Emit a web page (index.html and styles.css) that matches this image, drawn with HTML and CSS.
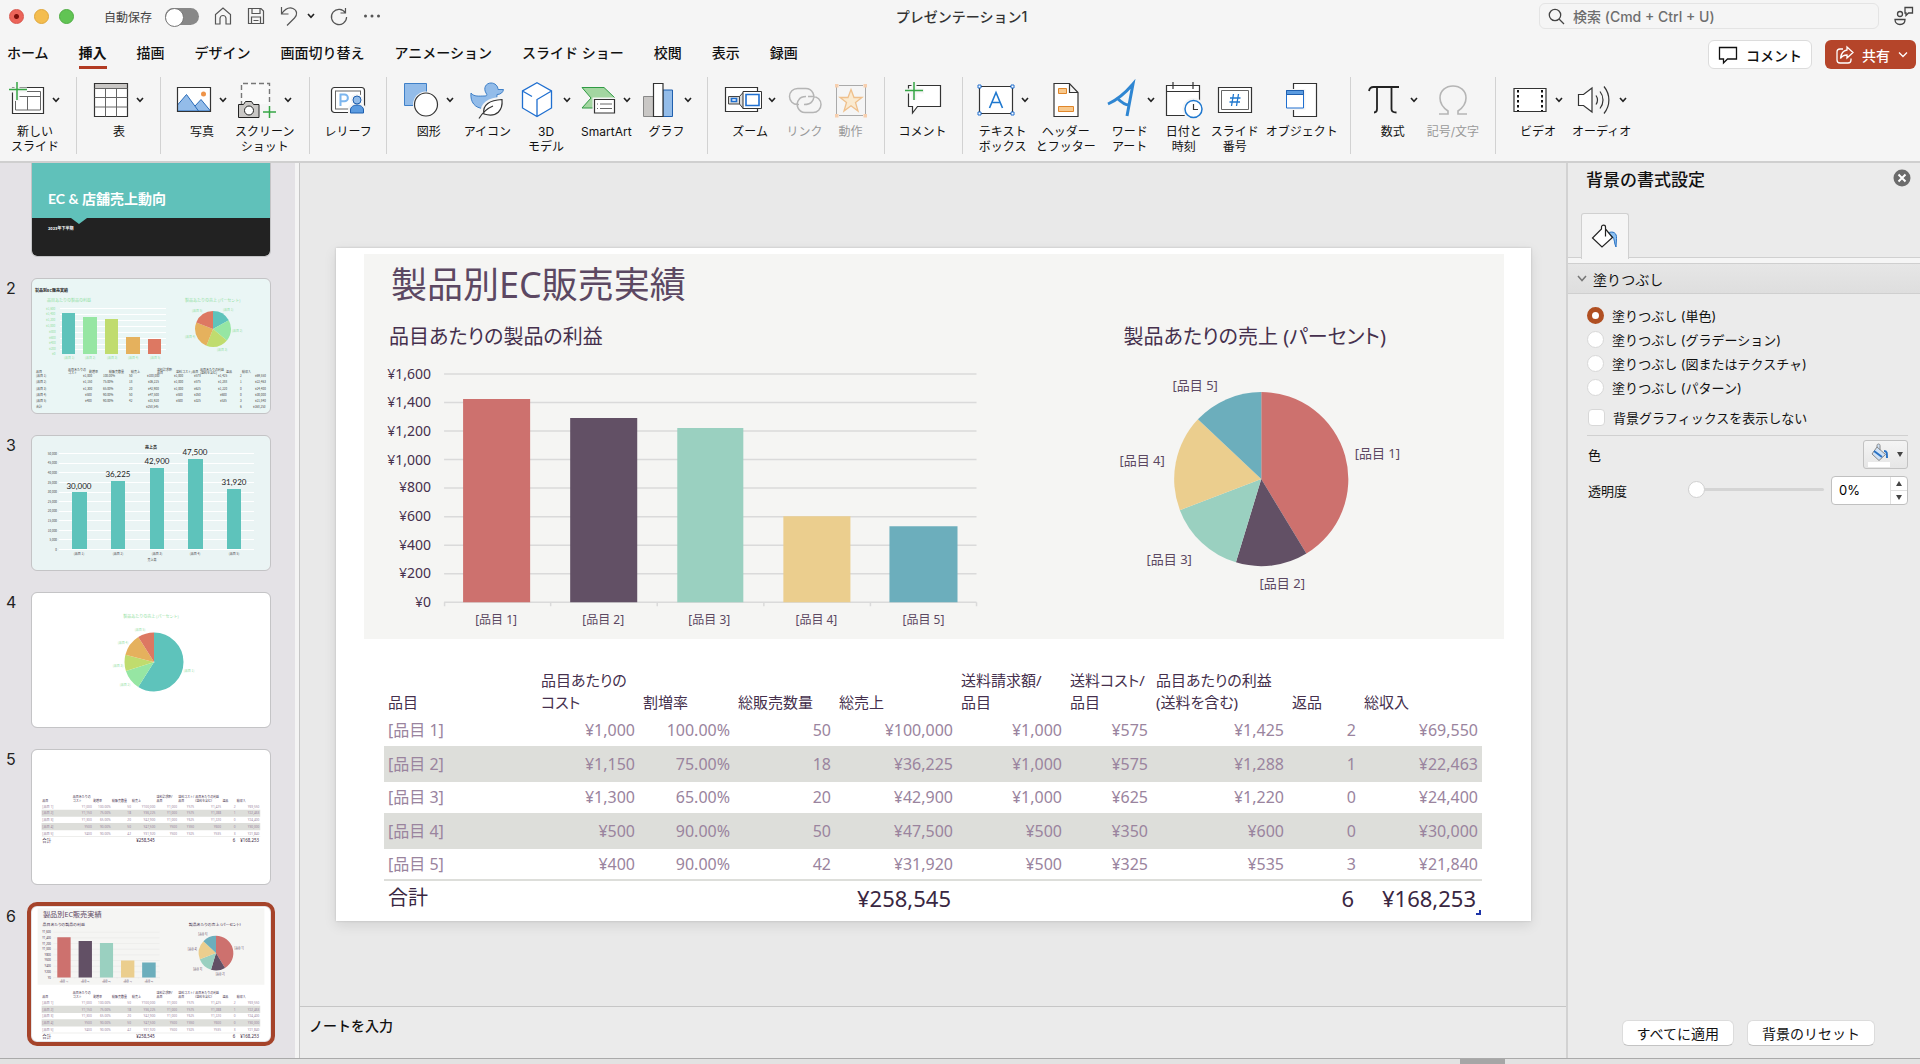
FILE: index.html
```html
<!DOCTYPE html>
<html lang="ja">
<head>
<meta charset="utf-8">
<title>プレゼンテーション1</title>
<link rel="stylesheet" href="styles.css">
</head>
<body>
<svg class="defs" aria-hidden="true">
  <defs>
    <symbol id="chev" viewBox="0 0 8 6"><path d="M1 1l3 3.4L7 1" fill="none" stroke="currentColor" stroke-width="1.6"/></symbol>
    <g id="slide-table">
      <path class="band" d="M48 496h1098v36H48zM48 563h1098v36H48zM48 631h1098v2H48z"/>
      <g class="t-head">
        <text x="52" y="458">品目</text>
        <text x="205" y="436">品目あたりの<tspan x="205" y="458">コスト</tspan></text>
        <text x="307" y="458">割増率</text>
        <text x="402" y="458">総販売数量</text>
        <text x="502" y="458">総売上</text>
        <text x="625" y="436">送料請求額/<tspan x="625" y="458">品目</tspan></text>
        <text x="734" y="436">送料コスト/<tspan x="734" y="458">品目</tspan></text>
        <text x="820" y="436">品目あたりの利益<tspan x="820" y="458">(送料を含む)</tspan></text>
        <text x="956" y="458">返品</text>
        <text x="1028" y="458">総収入</text>
      </g>
      <g class="t-body">
        <text x="52" y="487">[品目 1]<tspan x="52" y="520">[品目 2]</tspan><tspan x="52" y="554">[品目 3]</tspan><tspan x="52" y="588">[品目 4]</tspan><tspan x="52" y="621">[品目 5]</tspan></text>
        <g class="t-end">
          <text x="300" y="487">¥1,000<tspan x="300" y="520">¥1,150</tspan><tspan x="300" y="554">¥1,300</tspan><tspan x="300" y="588">¥500</tspan><tspan x="300" y="621">¥400</tspan></text>
          <text x="395" y="487">100.00%<tspan x="395" y="520">75.00%</tspan><tspan x="395" y="554">65.00%</tspan><tspan x="395" y="588">90.00%</tspan><tspan x="395" y="621">90.00%</tspan></text>
          <text x="497" y="487">50<tspan x="497" y="520">18</tspan><tspan x="497" y="554">20</tspan><tspan x="497" y="588">50</tspan><tspan x="497" y="621">42</tspan></text>
          <text x="619" y="487">¥100,000<tspan x="619" y="520">¥36,225</tspan><tspan x="619" y="554">¥42,900</tspan><tspan x="619" y="588">¥47,500</tspan><tspan x="619" y="621">¥31,920</tspan></text>
          <text x="728" y="487">¥1,000<tspan x="728" y="520">¥1,000</tspan><tspan x="728" y="554">¥1,000</tspan><tspan x="728" y="588">¥500</tspan><tspan x="728" y="621">¥500</tspan></text>
          <text x="814" y="487">¥575<tspan x="814" y="520">¥575</tspan><tspan x="814" y="554">¥625</tspan><tspan x="814" y="588">¥350</tspan><tspan x="814" y="621">¥325</tspan></text>
          <text x="949" y="487">¥1,425<tspan x="949" y="520">¥1,288</tspan><tspan x="949" y="554">¥1,220</tspan><tspan x="949" y="588">¥600</tspan><tspan x="949" y="621">¥535</tspan></text>
          <text x="1022" y="487">2<tspan x="1022" y="520">1</tspan><tspan x="1022" y="554">0</tspan><tspan x="1022" y="588">0</tspan><tspan x="1022" y="621">3</tspan></text>
          <text x="1142" y="487">¥69,550<tspan x="1142" y="520">¥22,463</tspan><tspan x="1142" y="554">¥24,400</tspan><tspan x="1142" y="588">¥30,000</tspan><tspan x="1142" y="621">¥21,840</tspan></text>
        </g>
      </g>
      <g class="t-total">
        <text x="52" y="657">合計</text>
        <g class="t-end"><text x="617" y="657">¥258,545</text><text x="1020" y="657">6</text><text x="1140" y="657">¥168,253</text></g>
      </g>
    </g>
  </defs>
</svg>

<div class="app">
  <header class="chrome">
    <div class="titlebar">
      <div class="tb-left">
        <div class="lights"><button class="light red" aria-label="閉じる"></button><button class="light yellow" aria-label="しまう"></button><button class="light green" aria-label="拡大"></button></div>
        <label class="autosave"><span>自動保存</span><input type="checkbox" role="switch"></label>
        <div class="quick">
          <button aria-label="ホーム"><svg width="18" height="18" viewBox="0 0 18 18"><path d="M1.5 17V7.5L9 1l7.500 6.500V17h-4.500v-5.500a3 3 0 0 0-6 0V17z"/></svg></button>
          <button aria-label="保存"><svg width="18" height="18" viewBox="0 0 18 18"><path d="M1.500 1.500h12.500l2.500 2.500v12.500h-15zM5 1.500v5h8v-5M4.500 16.500v-6.500h9v6.500M6.500 13.500h5"/></svg></button>
          <button class="undo" aria-label="元に戻す"><svg width="18" height="20" viewBox="0 0 18 20"><path d="M1.500 1v7h7M1.500 8C5 3 9 .8 13 2.500c4.500 2 4.500 6.500 1.500 9.500L7 19.500"/></svg><svg class="chev" width="8" height="6"><use href="#chev"/></svg></button>
          <button aria-label="やり直し"><svg width="18" height="18" viewBox="0 0 18 18"><path d="M15.500 1v5H10.500M15.500 6A7.600 7.600 0 1 0 16.600 10"/></svg></button>
          <button aria-label="その他"><svg width="18" height="4" viewBox="0 0 18 4"><path class="dots" d="M2.500 2h0M9 2h0M15.500 2h0"/></svg></button>
        </div>
      </div>
      <div class="doc-title">プレゼンテーション1</div>
      <div class="tb-right">
        <label class="search"><svg width="17" height="17" viewBox="0 0 17 17"><circle cx="7" cy="7" r="5.700"/><path d="M11 11l5 5"/></svg><input type="text" aria-label="検索" placeholder="検索 (Cmd + Ctrl + U)"></label>
        <button class="presence" aria-label="共同編集"><svg width="20" height="20" viewBox="0 0 20 20"><circle cx="6" cy="8" r="2.500"/><path d="M1 13.500h10c0 3-2 5-5 5s-5-2-5-5zM11 1.500h7.500v5.500h-4l-2.500 2.500V7h-1z"/></svg></button>
      </div>
    </div>

    <div class="tabrow">
      <nav class="tabs">
        <a href="#">ホーム</a><a href="#" class="active" aria-current="page">挿入</a><a href="#">描画</a><a href="#">デザイン</a><a href="#">画面切り替え</a><a href="#">アニメーション</a><a href="#">スライド ショー</a><a href="#">校閲</a><a href="#">表示</a><a href="#">録画</a>
      </nav>
      <div class="actions">
        <button class="btn-comment"><svg width="20" height="18" viewBox="0 0 20 18"><path d="M1.500 1.500h17v11.500h-9L5.500 17v-4h-4z"/></svg>コメント</button>
        <button class="btn-share"><svg width="18" height="18" viewBox="0 0 18 18"><path d="M7 3H4a3 3 0 0 0-3 3v8a3 3 0 0 0 3 3h8a3 3 0 0 0 3-3v-1.500M11 1l6 5.500-6 5.500V9C8 9 6 10 4.500 12.500 5 8 7.500 4.500 11 4z"/></svg>共有<svg width="10" height="7" viewBox="0 0 10 7"><path d="M1 1.500l4 4 4-4"/></svg></button>
      </div>
    </div>

    <div class="ribbon">
      <div class="group g-first">
        <button class="tool"><span class="ico"><svg width="34" height="36" viewBox="0 0 34 36"><path class="k" fill="#fff" d="M2.500 5.500h31v26h-31z"/><path class="g2" d="M5.500 9.500h25v18.500h-25zM5.500 14.500h25M17.500 14.500v13.500"/><path d="M7 1v18M0 8h17" stroke="#f5f5f5" stroke-width="5"/><path d="M7 0v18M-1 7.500h18" stroke="#36a645" stroke-width="1.500"/></svg><svg class="chev" width="8" height="6"><use href="#chev"/></svg></span><span class="lbl">新しい<br>スライド</span></button>
      </div>
      <div class="group">
        <button class="tool"><span class="ico"><svg width="34" height="36" viewBox="0 0 34 36"><path fill="#fff" d="M.5 1.500h33v33H.5z"/><path fill="#c9c7c5" d="M.5 1.500h33v5H.5z"/><path class="k" d="M.5 1.500h33v33H.5z"/><path class="g2" d="M.5 6.500h33M.5 15.500h33M.5 25h33M11.500 6.500v28M22.500 6.500v28"/></svg><svg class="chev" width="8" height="6"><use href="#chev"/></svg></span><span class="lbl">表</span></button>
      </div>
      <div class="group g-pic">
        <button class="tool"><span class="ico"><svg width="34" height="36" viewBox="0 0 34 36"><path fill="#fff" d="M.5 5.500h33v24H.5z"/><path fill="#93bce9" stroke="#2b6cb8" d="M.5 23L9.500 12.500l12 16.500M18 24l6-6.500 9.500 11.500H.5V23"/><circle cx="26.500" cy="12" r="2.500" fill="#ee9348"/><path class="k" d="M.5 5.500h33v24H.5z"/></svg><svg class="chev" width="8" height="6"><use href="#chev"/></svg></span><span class="lbl">写真</span></button>
        <button class="tool"><span class="ico"><svg width="38" height="36" viewBox="0 0 38 36"><path fill="#fafafa" stroke="#777" stroke-width="1.400" stroke-dasharray="5 3" d="M3.500 24V1.500h28v20"/><path fill="#c9c7c5" stroke="#222" d="M.5 22.500h5l2-3h6l2 3h5.500v13H.5z"/><ellipse cx="11" cy="28.500" rx="4.500" ry="4.500" fill="#fff" stroke="#222"/><path d="M31.500 24v12M25 30h13" stroke="#36a645" stroke-width="1.500"/></svg><svg class="chev" width="8" height="6"><use href="#chev"/></svg></span><span class="lbl">スクリーン<br>ショット</span></button>
      </div>
      <div class="group g-relief">
        <button class="tool"><span class="ico"><svg width="34" height="36" viewBox="0 0 34 36"><rect class="k" fill="#fff" x=".5" y="5.500" width="33" height="25" rx="3"/><rect class="g2" x="4.500" y="9" width="25" height="18"/><path d="M9.500 24V12.500h4a3.300 3.300 0 0 1 0 6.800h-4" stroke="#7db6ee" stroke-width="2"/><path fill="#f5f5f5" d="M17 32v-5c0-3 2-4 4-5-3-6 0-10 5-10s8 4 5 10c2 1 4 2 4 5v5z"/><circle cx="26" cy="18" r="4" fill="#93bce9" stroke="#1f5fae"/><path fill="#5b9be0" stroke="#1f5fae" d="M19.500 31v-3c0-3 3-5 6.500-5s6.500 2 6.500 5v3z"/></svg></span><span class="lbl">レリーフ</span></button>
      </div>
      <div class="group g-draw">
        <button class="tool"><span class="ico"><svg width="34" height="36" viewBox="0 0 34 36"><path fill="#93bce9" stroke="#3f80c8" d="M.5 1.500h22v22H.5z"/><circle cx="22" cy="22.500" r="13" fill="#f5f5f5"/><circle class="k" cx="22" cy="22.500" r="11.500" fill="#fff"/></svg><svg class="chev" width="8" height="6"><use href="#chev"/></svg></span><span class="lbl">図形</span></button>
        <button class="tool"><span class="ico"><svg width="34" height="36" viewBox="0 0 34 36"><path fill="#93bce9" stroke="#3f80c8" d="M1 11c3 4 8 3 14 3 2 0 2.500-1 1-3-3-5 0-10 5-10 4 0 7 3 7 6.500h5.500c-.5 3-3 5-6.500 5 0 8-3 14-13 14C5 26.500 0 20 1 11z"/><path fill="#fff" stroke="#f5f5f5" stroke-width="4" d="M13 32c-2-9 6-15 19-15 1 11-5 20-17 16z"/><path class="k" fill="#fff" d="M14 32c-2-9 6-14 18-14.500C33 28 27 36 14 32zM9 36.500C13 30 18 26 23 24"/></svg></span><span class="lbl">アイコン</span></button>
        <button class="tool"><span class="ico wide"><svg width="32" height="36" viewBox="0 0 32 36"><path fill="#fff" stroke="#1f6fd0" stroke-width="1.300" d="M16 .8l14.500 8.200v17L16 34.500 1.500 26V9zM16 34.500V17.500L30.500 9M1.500 9l9.500 5.500"/></svg><svg class="chev" width="8" height="6"><use href="#chev"/></svg></span><span class="lbl">3D<br>モデル</span></button>
        <button class="tool"><span class="ico"><svg width="34" height="36" viewBox="0 0 34 36"><path fill="#a3d6a1" stroke="#2f9a43" d="M1 5.500h22L34 16v10H1l9-10z"/><path fill="#f5f5f5" d="M11.500 15.500H36V34H11.500z"/><path class="k" fill="#fff" d="M13.500 17.500h20v13.500h-20z"/><path class="g2" d="M16 22h1M19 22h12M16 26.500h1M19 26.500h12"/></svg><svg class="chev" width="8" height="6"><use href="#chev"/></svg></span><span class="lbl">SmartArt</span></button>
        <button class="tool"><span class="ico wide"><svg width="32" height="36" viewBox="0 0 32 36"><path fill="#c9c7c5" stroke="#888" d="M1.500 14.500h10v20h-10z"/><path fill="#93bce9" stroke="#1f5fae" d="M21 8h9.500v26.500H21z"/><path class="k" fill="#fff" d="M11.500 1.500h9.500v33h-9.500z"/></svg><svg class="chev" width="8" height="6"><use href="#chev"/></svg></span><span class="lbl">グラフ</span></button>
      </div>
      <div class="group g-link">
        <button class="tool"><span class="ico tight"><svg width="37" height="36" viewBox="0 0 37 36"><path class="k" fill="#fff" d="M.5 5.500h32v24H.5z"/><path fill="#dcdcdc" stroke="#444" d="M3.500 14.500h11v7.500h-11zM14.500 14.500l4-4.500v17l-4-5z"/><path fill="#fff" stroke="#333" d="M18 9.500h18.500v17H18z"/><path fill="#fff" stroke="#1f6fd0" stroke-width="1.600" d="M21 12.500h13v11H21zM6.500 16.500h5v3h-5z"/></svg><svg class="chev" width="8" height="6"><use href="#chev"/></svg></span><span class="lbl">ズーム</span></button>
        <button class="tool off" disabled><span class="ico"><svg width="34" height="36" viewBox="0 0 34 36"><path stroke="#b5b5b5" stroke-width="1.500" d="M11 22.500h-1.500a8 8 0 0 1 0-16h8A8 8 0 0 1 24 19.500c-2 3-5 3-8 3M20 14.500h5a8 8 0 0 1 0 16h-8a8 8 0 0 1-6-13c2-3 4-3 7-3"/></svg></span><span class="lbl">リンク</span></button>
        <button class="tool off" disabled><span class="ico"><svg width="34" height="36" viewBox="0 0 34 36"><path stroke="#aaa" d="M2.500 5v27M31.500 5v27M5 3.500h24M5 33.500h24"/><path fill="#f7cfae" d="M1 2h3.500v3.500H1zM29.500 2H33v3.500h-3.500zM1 32h3.500v3.500H1zM29.500 32H33v3.500h-3.500z"/><path fill="#faead0" stroke="#efc08c" stroke-width="1.300" d="M17 7.500l3 8h8l-6.500 5 2.500 8.500-7-5.300-7 5.300 2.500-8.500-6.500-5h8z"/></svg></span><span class="lbl">動作</span></button>
      </div>
      <div class="group g-comment">
        <button class="tool"><span class="ico"><svg width="36" height="36" viewBox="0 0 36 36"><path class="k" fill="#fff" d="M3.500 3.500h32v21h-23L7.500 31v-6.500h-4z"/><path d="M9 2v16M0 9h19" stroke="#f5f5f5" stroke-width="5"/><path d="M9 0v18M0 8.500h18" stroke="#36a645" stroke-width="1.500"/></svg></span><span class="lbl">コメント</span></button>
      </div>
      <div class="group g-text">
        <button class="tool"><span class="ico tight"><svg width="38" height="36" viewBox="0 0 38 36"><path class="k" fill="#fff" d="M2.500 4.500h33v27h-33z"/><path fill="#fff" stroke="#1f6fd0" d="M1 3h3v3H1zM34 3h3v3h-3zM1 30h3v3H1zM34 30h3v3h-3z"/><path stroke="#1f78cf" stroke-width="1.600" d="M12.500 26L19 10.500 25.500 26M14.500 20.500h9"/></svg><svg class="chev" width="8" height="6"><use href="#chev"/></svg></span><span class="lbl">テキスト<br>ボックス</span></button>
        <button class="tool"><span class="ico"><svg width="26" height="36" viewBox="0 0 26 36"><path class="k" fill="#fff" d="M1 1.500h15.500l8.500 9v24H1zM16.500 1.500v9H25"/><path fill="#f8c98d" stroke="#e0862a" d="M5.500 6.500h8v5h-8zM5.500 24.500h15v5h-15z"/></svg></span><span class="lbl">ヘッダー<br>とフッター</span></button>
        <button class="tool t-wa"><span class="ico wide"><svg width="32" height="36" viewBox="0 0 32 36"><path stroke="#2f86d2" stroke-width="3" d="M3 22C12 18 22 9 28 2L22 34M12 16c4 4 8 7 12 7"/></svg><svg class="chev" width="8" height="6"><use href="#chev"/></svg></span><span class="lbl">ワード<br>アート</span></button>
        <button class="tool t-date"><span class="ico"><svg width="38" height="38" viewBox="0 0 38 38"><path class="k" fill="#fff" d="M1.500 4.500h33v30h-33zM1.500 10.500h33M8 1v7M28 1v7"/><circle cx="28.500" cy="28" r="11" fill="#f5f5f5"/><circle cx="28.500" cy="28" r="8.500" fill="#fff" stroke="#1f78cf" stroke-width="1.500"/><path class="k" d="M28.500 23v5.500h4.500"/></svg></span><span class="lbl">日付と<br>時刻</span></button>
        <button class="tool"><span class="ico"><svg width="34" height="36" viewBox="0 0 34 36"><path class="k" fill="#fff" d="M.5 5.500h33v25H.5z"/><path class="g2" d="M3.500 8.500h27v19h-27z"/><path stroke="#1f78cf" stroke-width="1.300" d="M15.500 12l-2 12M20.500 12l-2 12M12 16h10.500M11.500 20h10.500"/></svg></span><span class="lbl">スライド<br>番号</span></button>
        <button class="tool"><span class="ico"><svg width="32" height="36" viewBox="0 0 32 36"><path class="k" fill="#fff" d="M7.500 1.500h23v33h-23z"/><path stroke="#f5f5f5" stroke-width="3" d="M.5 8.500H18v18H.5z"/><path fill="#fff" stroke="#1f6fd0" d="M.5 8.500h17v17.500H.5z"/><path fill="#5b9be0" stroke="#1f5fae" d="M.5 8.500h17v4H.5z"/></svg></span><span class="lbl">オブジェクト</span></button>
      </div>
      <div class="group">
        <button class="tool"><span class="ico wide"><svg width="32" height="36" viewBox="0 0 32 36"><path stroke="#222" stroke-width="1.800" d="M1 9c.5-3 2-4 4.500-4H31M9 5v22c0 2-1 3.500-3 3.500M23.500 5v22c0 2.500 1.500 3.500 5 3.500"/></svg><svg class="chev" width="8" height="6"><use href="#chev"/></svg></span><span class="lbl">数式</span></button>
        <button class="tool off" disabled><span class="ico"><svg width="30" height="36" viewBox="0 0 30 36"><path stroke="#b5b5b5" stroke-width="1.600" d="M1 32h9v-3C4 25 2 20.500 2 16 2 8.500 8 4 15 4s13 4.500 13 12c0 4.500-2 9-8 13v3h9"/></svg></span><span class="lbl">記号/文字</span></button>
      </div>
      <div class="group">
        <button class="tool"><span class="ico"><svg width="34" height="36" viewBox="0 0 34 36"><path class="k" fill="#fff" d="M1 6.500h32v23H1z"/><path stroke="#111" stroke-width="2" stroke-dasharray="2.500 2.500" d="M5 8v21M29 8v21"/></svg><svg class="chev" width="8" height="6"><use href="#chev"/></svg></span><span class="lbl">ビデオ</span></button>
        <button class="tool"><span class="ico"><svg width="34" height="36" viewBox="0 0 34 36"><path class="k" fill="#fff" d="M1.500 12.500h5L15 6v24l-8.500-6.500h-5z"/><path class="k" d="M19 13.500c2 3 2 6 0 9M23 9.500c4 5 4 12 0 17M27 4.500c6.500 8 6.500 19 0 27"/></svg><svg class="chev" width="8" height="6"><use href="#chev"/></svg></span><span class="lbl">オーディオ</span></button>
      </div>
    </div>
  </header>

  <main class="work">
    <aside class="thumbs">
      <ol>
        <li><span class="num"></span>
          <button class="thumb"><svg viewBox="0 0 238 134"><path fill="#222" d="M0 0h238v134H0z"/><path fill="#60c1ba" d="M0 0h238v96H55l-8 6-8-6H0z"/><text class="th-title" x="16" y="82">EC &amp; 店舗売上動向</text><text class="th-sub" x="16" y="108">2023年下半期</text></svg></button></li>
        <li><span class="num">2</span>
          <button class="thumb"><svg viewBox="0 0 238 134"><path fill="#eaf6f5" d="M0 0h238v134H0z"/>
            <path stroke="#fff" d="M28 29.500h106M28 35.500h106M28 41.500h106M28 47.500h106M28 53.500h106M28 59.500h106M28 65.500h106M28 70.500h106"/>
            <path fill="#5ec3bb" d="M30 34h13v41H30z"/><path fill="#96e6a3" d="M51 38h14v37H51z"/><path fill="#c0dc6e" d="M73 40h13v35H73z"/><path fill="#e5b15d" d="M94 58h14v17H94z"/><path fill="#dd7862" d="M116 60h13v15h-13z"/>
            <g class="pie" transform="rotate(-90 181 50)"><circle class="wedge-s2" cx="181" cy="50" r="9" pathLength="100" stroke="#5ec3bb" stroke-dasharray="17 83"/><circle class="wedge-s2" cx="181" cy="50" r="9" pathLength="100" stroke="#96e6a3" stroke-dasharray="19 81" stroke-dashoffset="-17"/><circle class="wedge-s2" cx="181" cy="50" r="9" pathLength="100" stroke="#c0dc6e" stroke-dasharray="20 80" stroke-dashoffset="-36"/><circle class="wedge-s2" cx="181" cy="50" r="9" pathLength="100" stroke="#e5b15d" stroke-dasharray="25 75" stroke-dashoffset="-56"/><circle class="wedge-s2" cx="181" cy="50" r="9" pathLength="100" stroke="#dd7862" stroke-dasharray="19 81" stroke-dashoffset="-81"/></g>
            <text class="th-b4" x="3" y="13">製品別EC販売実績</text>
            <g class="th-green"><text class="th-4" x="15" y="23">品目あたりの製品の利益</text><text class="th-4" x="153" y="23">製品あたりの売上 (パーセント)</text>
            <text class="th-3" x="14" y="31">¥1,600<tspan x="14" y="36">¥1,400</tspan><tspan x="14" y="42">¥1,200</tspan><tspan x="14" y="48">¥1,000</tspan><tspan x="17" y="54">¥800</tspan><tspan x="17" y="60">¥600</tspan><tspan x="17" y="65">¥400</tspan><tspan x="17" y="71">¥200</tspan><tspan x="20" y="76">¥0</tspan></text>
            <text class="th-3" x="32" y="80">[品目 1]<tspan x="53">[品目 2]</tspan><tspan x="75">[品目 3]</tspan><tspan x="96">[品目 4]</tspan><tspan x="118">[品目 5]</tspan></text>
            <text class="th-3" x="160" y="33">[品目 5]<tspan x="191" y="32">[品目 1]</tspan><tspan x="200" y="53">[品目 2]</tspan><tspan x="185" y="72">[品目 3]</tspan><tspan x="153" y="59">[品目 4]</tspan></text></g>
            <text class="th-3" x="4" y="94">品目<tspan x="36" y="92">品目あたりの</tspan><tspan x="36" y="95">コスト</tspan><tspan x="57" y="94">割増率</tspan><tspan x="77">総販売数量</tspan><tspan x="99">総売上</tspan><tspan x="125" y="92">送料請求額</tspan><tspan x="125" y="95">品目</tspan><tspan x="144" y="94">送料コスト/品目</tspan><tspan x="168" y="92">品目あたりの利益</tspan><tspan x="168" y="95">(送料を含む)</tspan><tspan x="194" y="94">返品</tspan><tspan x="210">総収入</tspan></text>
            <text class="th-3" x="4" y="98">[品目 1]<tspan x="51">¥1,000</tspan><tspan x="71">100.00%</tspan><tspan x="97">50</tspan><tspan x="115">¥100,000</tspan><tspan x="142">¥1,000</tspan><tspan x="162">¥575</tspan><tspan x="186">¥1,425</tspan><tspan x="208">2</tspan><tspan x="223">¥69,550</tspan></text>
            <text class="th-3" x="4" y="104">[品目 2]<tspan x="51">¥1,150</tspan><tspan x="71">75.00%</tspan><tspan x="97">18</tspan><tspan x="116">¥36,225</tspan><tspan x="142">¥1,000</tspan><tspan x="162">¥575</tspan><tspan x="186">¥1,288</tspan><tspan x="208">1</tspan><tspan x="223">¥22,463</tspan></text>
            <text class="th-3" x="4" y="111">[品目 3]<tspan x="51">¥1,300</tspan><tspan x="71">65.00%</tspan><tspan x="97">20</tspan><tspan x="116">¥42,900</tspan><tspan x="142">¥1,000</tspan><tspan x="162">¥625</tspan><tspan x="186">¥1,220</tspan><tspan x="208">0</tspan><tspan x="223">¥24,400</tspan></text>
            <text class="th-3" x="4" y="117">[品目 4]<tspan x="53">¥500</tspan><tspan x="71">90.00%</tspan><tspan x="97">50</tspan><tspan x="116">¥47,500</tspan><tspan x="144">¥500</tspan><tspan x="162">¥350</tspan><tspan x="188">¥600</tspan><tspan x="208">0</tspan><tspan x="223">¥30,000</tspan></text>
            <text class="th-3" x="4" y="123">[品目 5]<tspan x="53">¥400</tspan><tspan x="71">90.00%</tspan><tspan x="97">42</tspan><tspan x="116">¥31,920</tspan><tspan x="144">¥500</tspan><tspan x="162">¥325</tspan><tspan x="188">¥535</tspan><tspan x="208">3</tspan><tspan x="223">¥21,840</tspan></text>
            <text class="th-3" x="4" y="129">合計<tspan x="114">¥258,545</tspan><tspan x="208">6</tspan><tspan x="221">¥168,253</tspan></text>
          </svg></button></li>
        <li><span class="num">3</span>
          <button class="thumb"><svg viewBox="0 0 238 134"><path fill="#eaf4f4" d="M0 0h238v134H0z"/>
            <path stroke="#fff" d="M27 17.500h195M27 27.500h195M27 36.500h195M27 46.500h195M27 56.500h195M27 65.500h195M27 75.500h195M27 84.500h195M27 94.500h195M27 103.500h195M27 113.500h195"/>
            <path fill="#5ec3bb" d="M40 56h15v57H40zM79 45h14v68H79zM118 32h14v81h-14zM156 23h15v90h-15zM195 53h14v60h-14z"/>
            <text class="th-b4 mid" x="119" y="13">売上高</text>
            <g class="th-8 mid"><text x="47" y="53">30,000</text><text x="86" y="41">36,225</text><text x="125" y="28">42,900</text><text x="163" y="19">47,500</text><text x="202" y="49">31,920</text></g>
            <text class="th-3 t-end" x="25" y="19">50,000<tspan x="25" y="28">45,000</tspan><tspan x="25" y="38">40,000</tspan><tspan x="25" y="48">35,000</tspan><tspan x="25" y="57">30,000</tspan><tspan x="25" y="67">25,000</tspan><tspan x="25" y="76">20,000</tspan><tspan x="25" y="86">15,000</tspan><tspan x="25" y="96">10,000</tspan><tspan x="25" y="105">5,000</tspan><tspan x="25" y="115">0</tspan></text>
            <text class="th-3 mid" x="47" y="119">[品目 1]<tspan x="86">[品目 2]</tspan><tspan x="125">[品目 3]</tspan><tspan x="163">[品目 4]</tspan><tspan x="202">[品目 5]</tspan><tspan x="120" y="125">売上高</tspan></text>
          </svg></button></li>
        <li><span class="num">4</span>
          <button class="thumb"><svg viewBox="0 0 238 134">
            <g class="pie" transform="rotate(-90 122 69)"><circle class="wedge-s4" cx="122" cy="69" r="15" pathLength="100" stroke="#5ec3bb" stroke-dasharray="59 41"/><circle class="wedge-s4" cx="122" cy="69" r="15" pathLength="100" stroke="#96e6a3" stroke-dasharray="11 89" stroke-dashoffset="-59"/><circle class="wedge-s4" cx="122" cy="69" r="15" pathLength="100" stroke="#c0dc6e" stroke-dasharray="9 91" stroke-dashoffset="-70"/><circle class="wedge-s4" cx="122" cy="69" r="15" pathLength="100" stroke="#e5b15d" stroke-dasharray="12 88" stroke-dashoffset="-79"/><circle class="wedge-s4" cx="122" cy="69" r="15" pathLength="100" stroke="#dd7862" stroke-dasharray="9 91" stroke-dashoffset="-91"/></g>
            <g class="th-green mid"><text class="th-4" x="119" y="25">製品あたりの売上 (パーセント)</text><text class="th-3" x="108" y="38">[品目 5]<tspan x="91" y="51">[品目 4]</tspan><tspan x="86" y="74">[品目 3]</tspan><tspan x="93" y="93">[品目 2]</tspan><tspan x="157" y="79">[品目 1]</tspan></text></g>
          </svg></button></li>
        <li><span class="num">5</span>
          <button class="thumb"><svg viewBox="0 0 1195 672"><use href="#slide-table" y="-197"/></svg></button></li>
        <li><span class="num">6</span>
          <button class="thumb selected" aria-current="true"><svg viewBox="0 0 1195 672"><path fill="#f5f5f3" d="M28 6h1139v384H28z"/><text class="s-title" x="55" y="50">製品別EC販売実績</text><text class="s-sub" x="53" y="97">品目あたりの製品の利益</text><text class="s-sub" x="787" y="97">製品あたりの売上 (パーセント)</text><use href="#bar-chart" x="44" y="112"/><use href="#pie-chart" x="644" y="112"/><use href="#slide-table"/></svg></button></li>
      </ol>
    </aside>

    <section class="editor">
      <div class="canvas">
        <article class="slide">
          <section class="report">
            <h1>製品別EC販売実績</h1>
            <div class="charts">
              <figure class="fig-bar">
                <figcaption>品目あたりの製品の利益</figcaption>
                <svg viewBox="0 0 600 272" role="img" aria-label="品目あたりの製品の利益">
                  <g id="bar-chart">
                    <path class="grid" d="M64 14h532M64 42.500h532M64 71h532M64 99.500h532M64 128h532M64 156.500h532M64 185h532M64 213.500h532M64 242h532M64.500 242v4M170.500 242v4M277 242v4M383.500 242v4M490 242v4M596 242v4"/>
                    <path class="c1" d="M83 39h67v203H83z"/><path class="c2" d="M190 58h67v184h-67z"/><path class="c3" d="M297 68h66v174h-66z"/><path class="c4" d="M403 156h67v86h-67z"/><path class="c5" d="M509 166h68v76h-68z"/>
                    <g class="axis t-end"><text x="51" y="19">¥1,600</text><text x="51" y="47">¥1,400</text><text x="51" y="76">¥1,200</text><text x="51" y="105">¥1,000</text><text x="51" y="132">¥800</text><text x="51" y="161">¥600</text><text x="51" y="190">¥400</text><text x="51" y="218">¥200</text><text x="51" y="247">¥0</text></g>
                    <g class="cat mid"><text x="116" y="264">[品目 1]</text><text x="223" y="264">[品目 2]</text><text x="329" y="264">[品目 3]</text><text x="436" y="264">[品目 4]</text><text x="543" y="264">[品目 5]</text></g>
                  </g>
                </svg>
              </figure>
              <figure class="fig-pie">
                <figcaption>製品あたりの売上 (パーセント)</figcaption>
                <svg viewBox="0 0 523 272" role="img" aria-label="製品あたりの売上">
                  <g id="pie-chart">
                    <path class="c1" d="M280 119V32A87 87 0 0 1 325.100 193.400z"/>
                    <path class="c2" d="M280 119L325.100 193.400A87 87 0 0 1 254.700 202.200z"/>
                    <path class="c3" d="M280 119L254.700 202.200A87 87 0 0 1 198.700 150z"/>
                    <path class="c4" d="M280 119L198.700 150A87 87 0 0 1 216.700 59.300z"/>
                    <path class="c5" d="M280 119L216.700 59.300A87 87 0 0 1 280 32z"/>
                    <g class="plabel mid"><text x="396" y="98">[品目 1]</text><text x="301" y="228">[品目 2]</text><text x="188" y="204">[品目 3]</text><text x="161" y="105">[品目 4]</text><text x="214" y="30">[品目 5]</text></g>
                  </g>
                </svg>
              </figure>
            </div>
          </section>
          <div class="table-wrap">
            <table>
              <colgroup><col class="w1"><col class="w2"><col class="w3"><col class="w4"><col class="w5"><col class="w6"><col class="w7"><col class="w8"><col class="w9"><col class="w10"></colgroup>
              <thead><tr><th>品目</th><th>品目あたりの<br>コスト</th><th>割増率</th><th>総販売数量</th><th>総売上</th><th>送料請求額/<br>品目</th><th>送料コスト/<br>品目</th><th>品目あたりの利益<br>(送料を含む)</th><th>返品</th><th>総収入</th></tr></thead>
              <tbody>
                <tr><td>[品目 1]</td><td>¥1,000</td><td>100.00%</td><td>50</td><td>¥100,000</td><td>¥1,000</td><td>¥575</td><td>¥1,425</td><td>2</td><td>¥69,550</td></tr>
                <tr><td>[品目 2]</td><td>¥1,150</td><td>75.00%</td><td>18</td><td>¥36,225</td><td>¥1,000</td><td>¥575</td><td>¥1,288</td><td>1</td><td>¥22,463</td></tr>
                <tr><td>[品目 3]</td><td>¥1,300</td><td>65.00%</td><td>20</td><td>¥42,900</td><td>¥1,000</td><td>¥625</td><td>¥1,220</td><td>0</td><td>¥24,400</td></tr>
                <tr><td>[品目 4]</td><td>¥500</td><td>90.00%</td><td>50</td><td>¥47,500</td><td>¥500</td><td>¥350</td><td>¥600</td><td>0</td><td>¥30,000</td></tr>
                <tr><td>[品目 5]</td><td>¥400</td><td>90.00%</td><td>42</td><td>¥31,920</td><td>¥500</td><td>¥325</td><td>¥535</td><td>3</td><td>¥21,840</td></tr>
              </tbody>
              <tfoot><tr><td>合計</td><td></td><td></td><td></td><td>¥258,545</td><td></td><td></td><td></td><td>6</td><td>¥168,253</td></tr></tfoot>
            </table>
            <i class="resize-mark"></i>
          </div>
        </article>
      </div>
      <div class="notes">ノートを入力</div>
    </section>

    <aside class="panel">
      <div class="panel-head"><h2>背景の書式設定</h2><button class="close" aria-label="閉じる"><svg width="18" height="18" viewBox="0 0 18 18"><circle cx="9" cy="9" r="8.500" fill="#6c6c6c"/><path d="M5.500 5.500l7 7M12.500 5.500l-7 7" stroke="#fff" stroke-width="2"/></svg></button></div>
      <div class="panel-tabs"><button class="ptab" aria-label="塗りつぶし"><svg width="28" height="26" viewBox="0 0 28 26"><path fill="#8cc0f0" stroke="#2a72c4" d="M17 9c5-2.500 9 0 8.500 5.500L25 23c-2-3-1-9-4-11z"/><path fill="#fff" stroke="#222" stroke-width="1.200" d="M10.500 5v-2c0-2.500 4-2.500 4 0v2l7 8.500L11 23 1.500 14zM14.500 5v7.500"/></svg></button></div>
      <button class="section-head" aria-expanded="true"><svg width="10" height="7" viewBox="0 0 10 7"><path d="M1 1l4 4.500L9 1" stroke="#777" stroke-width="1.500"/></svg>塗りつぶし</button>
      <form class="panel-body">
        <label class="opt"><input type="radio" name="fill" checked>塗りつぶし (単色)</label>
        <label class="opt"><input type="radio" name="fill">塗りつぶし (グラデーション)</label>
        <label class="opt"><input type="radio" name="fill">塗りつぶし (図またはテクスチャ)</label>
        <label class="opt"><input type="radio" name="fill">塗りつぶし (パターン)</label>
        <label class="opt check"><input type="checkbox">背景グラフィックスを表示しない</label>
        <div class="field color"><span>色</span><button type="button" class="swatch" aria-label="色"><svg width="22" height="24" viewBox="0 0 22 24"><path fill="#cfe2f7" stroke="#888" d="M9 4L4 11l7 6.500 6.500-6zM9 4V2.500c0-2 3-2 3 0V7"/><path stroke="#2a72c4" stroke-width="2" d="M6 8l8 6M16 8c3 0 3 2 3 7"/><path fill="#fff" d="M0 19h22v5H0z"/></svg><svg width="6" height="5" viewBox="0 0 6 5"><path fill="#444" d="M0 0h6L3 5z"/></svg></button></div>
        <div class="field"><label for="alpha">透明度</label><input id="alpha" type="range" min="0" max="100" value="0"><span class="spin"><input type="text" value="0%" aria-label="透明度の値"><span class="steps"><button type="button" aria-label="増やす"><svg width="6" height="5" viewBox="0 0 6 5"><path fill="#444" d="M0 5h6L3 0z"/></svg></button><button type="button" aria-label="減らす"><svg width="6" height="5" viewBox="0 0 6 5"><path fill="#444" d="M0 0h6L3 5z"/></svg></button></span></span></div>
      </form>
      <div class="panel-foot"><button>すべてに適用</button><button>背景のリセット</button></div>
    </aside>
  </main>

  <footer class="status"><i></i></footer>
</div>
</body>
</html>
```
FILE: styles.css
```css
* { box-sizing: border-box; }
body {
  margin: 0;
  font-family: Inter, "Noto Sans CJK JP", sans-serif;
  color: #111;
  background: #ebebeb;
}
button { font: inherit; color: inherit; background: none; border: 0; padding: 0; margin: 0; }
a { color: inherit; text-decoration: none; }
svg { display: block; fill: none; overflow: visible; flex: none; }
.defs { position: absolute; width: 0; height: 0; }
.app { height: 100vh; display: grid; grid-template-rows: auto 1fr auto; overflow: hidden; }

/* title bar */
.chrome { background: #f5f5f5; border-bottom: 2px solid #cfcfcf; }
.titlebar { display: grid; grid-template-columns: 1fr auto 1fr; align-items: center; height: 32px; padding: 0 6px 0 9px; }
.tb-left, .tb-right, .quick, .lights, .autosave { display: flex; align-items: center; }
.lights { gap: 10px; }
.light { width: 15px; height: 15px; border-radius: 50%; }
.red { background: radial-gradient(circle, #7a0f0a 0 2px, #ec6459 3px); border: 1px solid #d8544a; }
.yellow { background: #f4bd4f; border: 1px solid #dfa73c; }
.green { background: #61c454; border: 1px solid #50ad44; }
.autosave { gap: 13px; margin-left: 30px; font-size: 12px; color: #444; }
.autosave input { appearance: none; margin: 0; width: 34px; height: 17px; border-radius: 9px; background: #888; display: flex; }
.autosave input::before { content: ""; width: 17px; height: 17px; border-radius: 50%; background: #fff; border: 1px solid #777; }
.quick { gap: 15px; margin-left: 15px; }
.quick svg { stroke: #555; stroke-width: 1.2; }
.quick .dots { stroke-width: 3; stroke-linecap: round; }
.undo { display: flex; align-items: center; gap: 9px; }
.quick .chev { stroke: none; color: #222; }
.doc-title { font-size: 14px; font-weight: 500; color: #333; }
.tb-right { justify-content: flex-end; gap: 15px; }
.search { display: flex; align-items: center; gap: 8px; width: 340px; height: 26px; padding: 0 8px; border: 1px solid #e4e4e4; border-radius: 6px; }
.search svg, .presence svg { stroke: #444; stroke-width: 1.3; }
.search input { flex: 1; min-width: 0; border: 0; outline: 0; background: none; padding: 0; font: 500 14px Inter, "Noto Sans CJK JP", sans-serif; }
.search input::placeholder { color: #6e6e6e; opacity: 1; }

/* tabs */
.tabrow { display: flex; justify-content: space-between; align-items: flex-end; height: 40px; padding: 0 4px 3px 7px; }
.tabs { display: flex; gap: 30px; font-size: 14px; font-weight: 500; line-height: 22px; white-space: nowrap; }
.tabs a { padding: 8px 0 2px; border-bottom: 3px solid transparent; }
.tabs .active { font-weight: 700; border-color: #b23b23; }
.actions { display: flex; gap: 13px; font-size: 14px; font-weight: 500; }
.actions button { display: flex; align-items: center; justify-content: center; height: 29px; border-radius: 6px; gap: 8px; }
.actions svg { stroke: currentColor; stroke-width: 1.3; }
.btn-comment { background: #fff; border: 1px solid #dcdcdc; padding: 0 9px; }
.actions .btn-share { background: #b5452a; color: #fff; padding: 0 8px 0 11px; }

/* ribbon */
.ribbon { display: flex; padding: 5px 0 7px; }
.group { display: flex; gap: 9px; padding: 0 16px 0 17px; border-right: 1px solid #d2d2d2; }
.group:last-child { border: 0; }
.g-first { padding-left: 10px; }
.g-pic { gap: 8px; padding: 0 15px 0 16px; }
.g-relief { padding: 0 14px; }
.g-draw { gap: 10px; padding-right: 15px; }
.g-link { gap: 11px; }
.g-comment { padding: 0 15px 0 14px; }
.g-text { gap: 7px; padding: 0 12px 0 14px; }
.tool { display: flex; flex-direction: column; align-items: center; gap: 6px; padding-top: 5px; min-height: 77px; }
.ico { display: flex; align-items: center; gap: 8px; height: 36px; }
.ico.wide { gap: 10px; }
.ico.tight { gap: 6px; }
.t-wa { width: 54px; }
.t-date { width: 40px; }
.lbl { font-size: 12px; line-height: 15px; white-space: nowrap; text-align: center; }
.tool .chev { color: #222; }
.off .lbl { color: #999; }
.k { stroke: #333; stroke-width: 1.2; }
.g2 { stroke: #666; stroke-width: 1; }

/* work area */
.work { display: grid; grid-template-columns: 300px minmax(0, 1fr) 354px; min-height: 0; }
.thumbs { background: #e4e2e6; border-right: 1px solid #c6c6c6; box-shadow: inset -4px 0 #f4f4f4; overflow: hidden; display: flex; flex-direction: column; justify-content: flex-end; padding: 0 29px 17px 0; }
.thumbs ol { list-style: none; margin: 0; padding: 0; display: flex; flex-direction: column; gap: 23px; }
.thumbs li { display: grid; grid-template-columns: 32px 1fr; }
.num { padding-left: 6px; font-size: 16px; line-height: 18px; color: #222; }
.thumb { display: block; background: #fff; border-radius: 5px; outline: 1px solid #c4c4c6; height: 134px; }
.thumb svg { width: 100%; height: 134px; border-radius: 5px; overflow: hidden; }
.thumb.selected { outline: 4px solid #a5432a; outline-offset: 1px; }
.th-title { font: 700 14px Lato, "Noto Sans CJK JP", sans-serif; fill: #fff; }
.th-sub { font: 700 4px "Noto Sans CJK JP", sans-serif; fill: #fff; }
.th-b4 { font: 700 4px "Noto Sans CJK JP", sans-serif; fill: #222; }
.th-4 { font: 4px "Noto Sans CJK JP", sans-serif; }
.th-3 { font: 3px "Noto Sans CJK JP", sans-serif; fill: #444; }
.th-8 { font: 8px Lato, sans-serif; fill: #222; }
.th-green, .th-green .th-3 { fill: #8fe0a0; }
.mid { text-anchor: middle; }
.t-end { text-anchor: end; }
.wedge-s2 { stroke-width: 18px; }
.wedge-s4 { stroke-width: 29px; }

.editor { display: grid; grid-template-rows: 1fr auto; min-height: 0; min-width: 0; }
.canvas { display: flex; align-items: center; padding: 0 35px 0 36px; background: #e9e9e9; min-height: 0; }
.notes { border-top: 1px solid #c6c6c6; height: 52px; padding: 8px 9px; font-size: 14px; line-height: 22px; font-weight: 500; background: #ebebeb; }

/* slide */
.slide {
  flex: 1; min-width: 0; aspect-ratio: 16 / 9; background: #fff;
  box-shadow: 0 0 2px #bbb, 0 4px 12px rgba(0, 0, 0, .1);
  padding: 6px 27px 0 28px;
  font-family: "Noto Sans", "Noto Sans CJK JP", sans-serif;
}
.report { background: #f5f5f3; padding: 6px 0 6px 16px; }
.report h1 { margin: 0 0 12px 11px; font-size: 36px; font-weight: 400; line-height: 50px; color: #5c4862; }
.charts { display: grid; grid-template-columns: 600fr 523fr; }
figure { margin: 0; }
figcaption { font-size: 20px; line-height: 30px; color: #45304d; padding-left: 9px; margin-bottom: 8px; }
.fig-pie figcaption { padding-left: 143px; }
figure svg { width: 100%; }
.s-title { font: 36px "Noto Sans", "Noto Sans CJK JP", sans-serif; fill: #5c4862; }
.s-sub { font: 20px "Noto Sans", "Noto Sans CJK JP", sans-serif; fill: #45304d; }
.grid { stroke: #dadada; stroke-width: 1.5; }
.axis { font: 14px "Noto Sans", sans-serif; fill: #45304d; }
.cat { font: 12px "Noto Sans", "Noto Sans CJK JP", sans-serif; fill: #5c4862; }
.plabel { font: 13px "Noto Sans", "Noto Sans CJK JP", sans-serif; fill: #5c4862; }
.slide, .slide *, .s-title, .s-sub, .t-head, .t-body, .t-total { font-feature-settings: "palt"; }
.c1 { fill: #cd716e; }
.c2 { fill: #625065; }
.c3 { fill: #9ad0c0; }
.c4 { fill: #ebce8e; }
.c5 { fill: #6caebc; }
.table-wrap { position: relative; margin: 30px 22px 0 20px; }
.slide table { width: 100%; table-layout: fixed; border-collapse: collapse; font-size: 16px; color: #9a849e; white-space: nowrap; }
.w1 { width: 153px; } .w2 { width: 102px; } .w3 { width: 95px; } .w4 { width: 101px; } .w5 { width: 122px; }
.w6 { width: 109px; } .w7 { width: 86px; } .w8 { width: 136px; } .w9 { width: 72px; } .w10 { width: 122px; }
.slide th { font-size: 15px; font-weight: 400; line-height: 22px; text-align: left; vertical-align: bottom; color: #45304d; padding: 0 4px 2px; }
.slide td { padding: 0 4px; text-align: right; line-height: 30px; height: 31px; }
.slide td:first-child { text-align: left; }
tbody tr:nth-child(even) { background: #dddeda; }
.slide tbody tr:nth-child(even) td { height: 36px; }
.slide tfoot td { border-top: 2px solid #dddeda; height: 35px; font-size: 22px; color: #3a2742; padding-right: 6px; }
.slide tfoot td:first-child { font-size: 20px; }
.resize-mark { position: absolute; right: 1px; bottom: 0; width: 5px; height: 5px; border: solid #1f35a8; border-width: 0 2px 2px 0; }
.band { fill: #dddeda; }
.t-head { font: 15px "Noto Sans", "Noto Sans CJK JP", sans-serif; fill: #45304d; }
.t-body { font: 16px "Noto Sans", "Noto Sans CJK JP", sans-serif; fill: #9a849e; }
.t-total { font: 22px "Noto Sans", "Noto Sans CJK JP", sans-serif; fill: #3a2742; }

/* format pane */
.panel { border-left: 2px solid #d2d2d2; background: #ebebeb; display: flex; flex-direction: column; font-size: 13px; min-height: 0; }
.panel-head { display: flex; justify-content: space-between; align-items: center; height: 30px; padding: 0 9px 0 18px; }
.panel-head h2 { margin: 0; font-size: 17px; font-weight: 500; }
.panel-tabs { height: 70px; padding: 20px 0 0 13px; background: linear-gradient(#ebebeb 64px, #d0d0d0 64px 65px, #f5f5f5 65px); }
.ptab { width: 48px; height: 46px; background: #f5f5f5; border: 1px solid #d0d0d0; border-bottom: 0; border-radius: 3px 3px 0 0; display: flex; align-items: center; justify-content: center; }
.section-head { display: flex; align-items: center; gap: 6px; height: 31px; padding-left: 9px; font-size: 14px; background: linear-gradient(#e6e6e6, #dedede); border: solid #cfcfcf; border-width: 1px 0; }
.panel-body { padding: 9px 12px 0 19px; }
.opt { display: flex; align-items: center; gap: 8px; height: 24px; }
.opt input { appearance: none; margin: 0; width: 17px; height: 17px; background: #fff; border: 1px solid #d8d8d8; border-radius: 50%; }
.opt input:checked { border: 5px solid #b04f22; }
.opt.check { height: 36px; padding-left: 1px; }
.opt.check input { border-radius: 4px; }
.field { display: flex; align-items: center; justify-content: space-between; height: 34px; padding-left: 1px; }
.field.color { border-top: 1px solid #d0d0d0; height: 38px; }
.swatch { width: 45px; height: 29px; border: 1px solid #c2c2c2; border-radius: 3px; background: linear-gradient(#f4f4f4, #e6e6e6); display: flex; align-items: center; justify-content: center; gap: 7px; }
.field input[type="range"] { appearance: none; background: none; width: 136px; height: 17px; margin: 0 7px 2px auto; }
.field input[type="range"]::-webkit-slider-runnable-track { height: 3px; border-radius: 2px; background: #d4d4d4; }
.field input[type="range"]::-webkit-slider-thumb { appearance: none; width: 17px; height: 17px; margin-top: -7px; border-radius: 50%; background: #fff; border: 1px solid #d0d0d0; }
.spin { display: flex; width: 77px; height: 29px; border: 1px solid #c0c0c0; border-radius: 4px; background: #fff; }
.spin input { flex: 1; min-width: 0; border: 0; outline: 0; background: none; padding: 0 0 0 7px; font: 13px Inter, sans-serif; }
.steps { width: 17px; display: grid; border-left: 1px solid #e0e0e0; }
.steps button { display: flex; align-items: center; justify-content: center; }
.steps button + button { border-top: 1px solid #e0e0e0; }
.panel-foot { margin-top: auto; display: flex; justify-content: flex-end; gap: 13px; padding: 0 45px 12px 0; }
.panel-foot button { height: 26px; padding: 0 14px; font-size: 14px; background: #fff; border: 1px solid #dcdcdc; border-bottom-color: #c4c4c4; border-radius: 6px; }

/* status strip */
.status { height: 6px; border-top: 1px solid #aaa; background: #e2e2e2; display: flex; justify-content: flex-end; padding-right: 415px; }
.status i { width: 45px; background: #a6a6a6; }
```
